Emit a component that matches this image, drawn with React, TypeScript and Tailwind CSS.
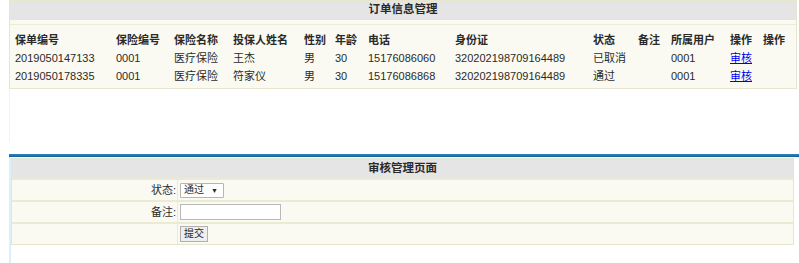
import React from 'react'

const orders = [
  {
    id: '2019050147133',
    code: '0001',
    name: '医疗保险',
    holder: '王杰',
    sex: '男',
    age: '30',
    phone: '15176086060',
    idCard: '320202198709164489',
    status: '已取消',
    note: '',
    user: '0001',
  },
  {
    id: '2019050178335',
    code: '0001',
    name: '医疗保险',
    holder: '符家仪',
    sex: '男',
    age: '30',
    phone: '15176086868',
    idCard: '320202198709164489',
    status: '通过',
    note: '',
    user: '0001',
  },
]

const heads = ['保单编号', '保险编号', '保险名称', '投保人姓名', '性别', '年龄', '电话', '身份证', '状态', '备注', '所属用户', '操作', '操作']

const cols =
  'grid grid-cols-[101px_58px_59px_71px_31px_33px_87px_138px_45px_33px_59px_33px_1fr] items-center h-[18px]'

const App: React.FC = () => {
  return (
    <div className="w-[799px] h-[263px] bg-white overflow-hidden text-[11px] text-[#2a2a2a] font-['Liberation_Sans','Noto_Sans_CJK_SC',sans-serif] leading-none">
      {/* 订单信息 */}
      <div className="ml-[9px] w-[788px] border border-[#e6e6cf] bg-[#fafaf2]">
        <div className="h-[19px] bg-[#e5e5e5] border-b border-[#e6e6cf] flex items-center justify-center font-bold text-[11.5px]">
          订单信息管理
        </div>
        <div className="h-[5px] border-b border-[#ececd6]" />
        <div className="pl-[5px] pt-[6px] pb-[3px]">
          <div className={cols + ' font-semibold'}>
            {heads.map((h, i) => (
              <span key={i}>{h}</span>
            ))}
          </div>
          {orders.map((o) => (
            <div key={o.id} className={cols}>
              <span>{o.id}</span>
              <span>{o.code}</span>
              <span>{o.name}</span>
              <span>{o.holder}</span>
              <span>{o.sex}</span>
              <span>{o.age}</span>
              <span>{o.phone}</span>
              <span>{o.idCard}</span>
              <span>{o.status}</span>
              <span>{o.note}</span>
              <span>{o.user}</span>
              <a href="#" className="text-[#0000ee] underline">
                审核
              </a>
              <span />
            </div>
          ))}
        </div>
      </div>

      <div className="ml-[9px] h-[53px] border-l border-[#eef3f7]" />
      <div className="h-[12px]" />
      <div className="ml-[9px] h-[3px] bg-gradient-to-b from-[#2f86c4] to-[#125f9c]" />

      {/* 审核管理 */}
      <div className="ml-[9px] h-[110px] border-l-2 border-[#dcf0fb] pt-[1px]">
        <div className="w-[783px] border border-[#e6e6cc] bg-[#fafaf2]">
          <div className="h-[19px] bg-[#e5e5e5] flex items-center justify-center font-bold text-[11.5px]">
            审核管理页面
          </div>
          <div className="flex h-[22px] border-t-2 border-[#ebebd3]">
            <div className="w-[166px] flex items-center justify-end pr-[1px] border-r border-[#ebebd3]">状态:</div>
            <div className="flex items-center pl-[2px]">
              <div className="relative w-[44px] h-[15px] bg-white border border-[#b5b5b5] rounded-[1px] flex items-center pl-[3px] text-[10px]">
                通过
                <span className="absolute right-[5px] top-[3px] text-[7px]">▼</span>
              </div>
            </div>
          </div>
          <div className="flex h-[22px] border-t-2 border-[#ebebd3]">
            <div className="w-[166px] flex items-center justify-end pr-[1px] border-r border-[#ebebd3]">备注:</div>
            <div className="flex items-center pl-[2px]">
              <input className="w-[101px] h-[16px] bg-white border border-[#b8b8b8] outline-none" />
            </div>
          </div>
          <div className="flex h-[22px] border-t-2 border-[#ebebd3]">
            <div className="w-[166px] border-r border-[#ebebd3]" />
            <div className="flex items-center pl-[2px]">
              <button className="w-[28px] h-[16px] bg-[#eeeeee] border border-[#b0b0b0] text-[10px] flex items-center justify-center">
                提交
              </button>
            </div>
          </div>
        </div>
      </div>
    </div>
  )
}

export default App
